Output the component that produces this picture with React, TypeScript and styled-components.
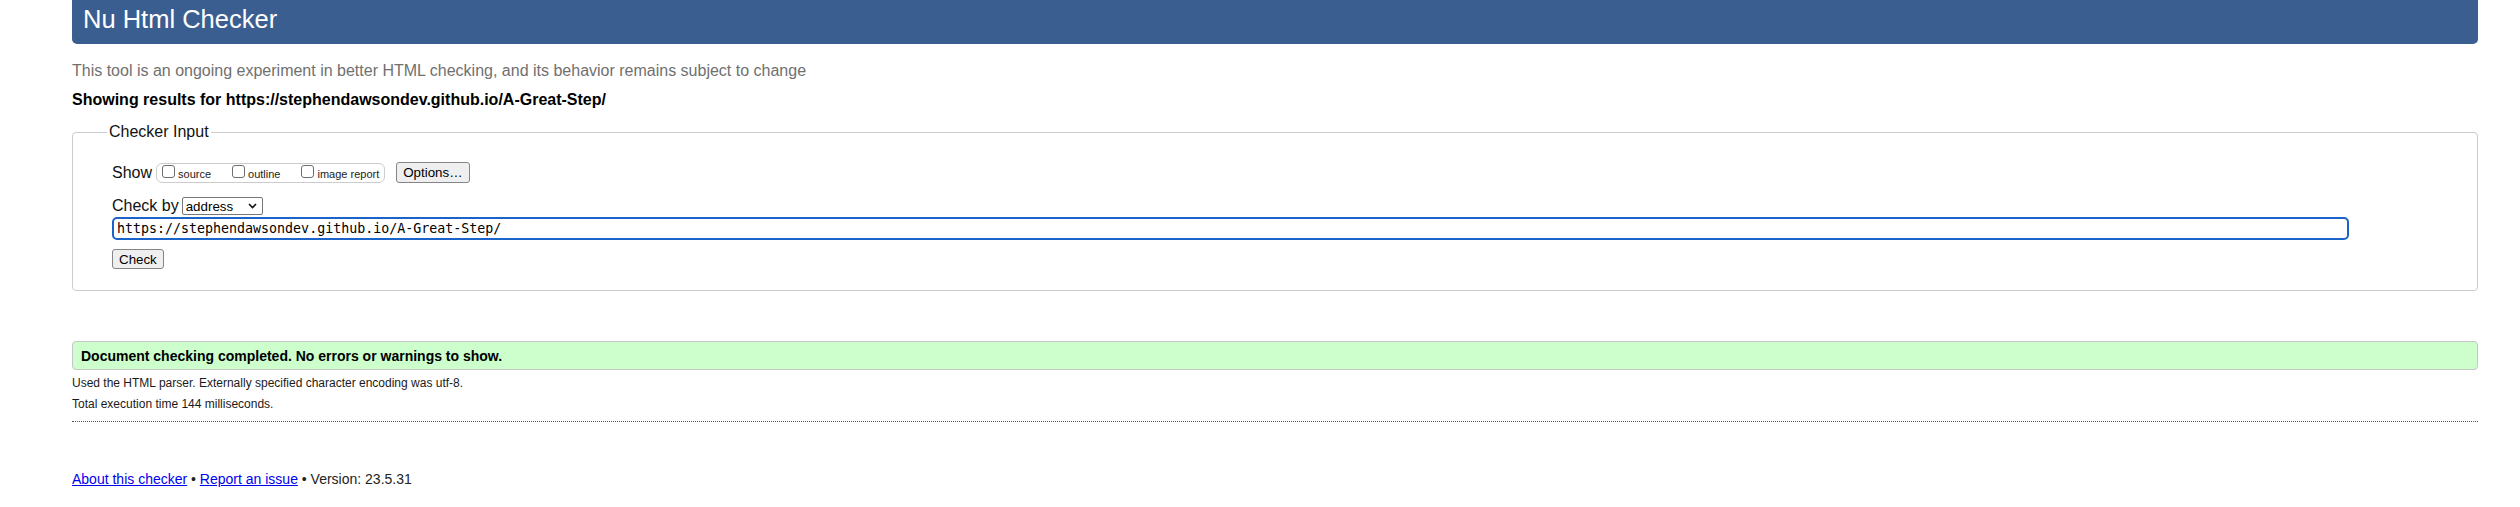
import React from "react";
import styled, { createGlobalStyle } from "styled-components";

const GlobalStyle = createGlobalStyle`
  html, body {
    margin: 0;
    padding: 0;
    background: #ffffff;
  }
  body {
    font-family: "Liberation Sans", Arial, Helvetica, sans-serif;
    color: #000000;
  }
`;

const Page = styled.div`
  padding: 0 42px 0 72px;
`;

const Header = styled.h1`
  margin: 0;
  box-sizing: border-box;
  height: 44px;
  padding: 0 11px 5px;
  line-height: 39px;
  font-size: 25.5px;
  font-weight: normal;
  color: #ffffff;
  background: #3b5e91;
  border-radius: 0 0 5px 5px;
`;

const Lead = styled.p<{ $mt: number; $bold?: boolean; $muted?: boolean }>`
  margin: ${(p) => p.$mt}px 0 0;
  font-size: 16px;
  line-height: 18px;
  font-weight: ${(p) => (p.$bold ? "bold" : "normal")};
  color: ${(p) => (p.$muted ? "#707070" : "#000000")};
`;

const Fieldset = styled.fieldset`
  margin: 14px 0 0;
  padding: 21px 38px 21px 39px;
  border: 1px solid #cccccc;
  border-radius: 4px;
  min-width: 0;
`;

const Legend = styled.legend`
  margin-left: -5px;
  padding: 0 2px;
  font-size: 16px;
  line-height: 18px;
  color: #111111;
`;

const FormRow = styled.div<{ $mt?: number; $h: number }>`
  display: flex;
  align-items: center;
  height: ${(p) => p.$h}px;
  margin-top: ${(p) => p.$mt ?? 0}px;
`;

const RowLabel = styled.span<{ $gap: number }>`
  font-size: 16px;
  line-height: 18px;
  margin-right: ${(p) => p.$gap}px;
  color: #111111;
`;

const OptionGroup = styled.span`
  box-sizing: border-box;
  display: flex;
  align-items: center;
  gap: 21px;
  height: 20px;
  padding: 0 5px 0 5px;
  border: 1px solid #cccccc;
  border-radius: 6px;
`;

const OptionItem = styled.label`
  display: inline-flex;
  align-items: center;
`;

const Checkbox = styled.input.attrs({ type: "checkbox" })`
  appearance: none;
  box-sizing: border-box;
  width: 13px;
  height: 13px;
  margin: -3px 3px 0 0;
  border: 1px solid #6e6e6e;
  border-radius: 3px;
  background: #ffffff;
`;

const OptionText = styled.span`
  font-size: 11px;
  line-height: 13px;
  margin-top: 3px;
  color: #222222;
`;

const Button = styled.button<{ $h: number; $ml?: number }>`
  box-sizing: border-box;
  height: ${(p) => p.$h}px;
  margin: 0 0 0 ${(p) => p.$ml ?? 0}px;
  padding: 0 6px;
  font-family: "Liberation Sans", Arial, Helvetica, sans-serif;
  font-size: 13.333px;
  color: #000000;
  background: #efefef;
  border: 1px solid #858585;
  border-radius: 3px;
`;

const SelectWrap = styled.span`
  position: relative;
  display: inline-flex;
`;

const Select = styled.select`
  appearance: none;
  box-sizing: border-box;
  width: 81px;
  height: 18px;
  padding: 0 0 0 3px;
  font-family: "Liberation Sans", Arial, Helvetica, sans-serif;
  font-size: 13.333px;
  color: #000000;
  background: #ffffff;
  border: 1px solid #767676;
  border-radius: 2px;
`;

const Chevron = styled.svg`
  position: absolute;
  right: 6px;
  top: 6px;
  pointer-events: none;
`;

const UrlInput = styled.input`
  box-sizing: border-box;
  width: calc(100% - 90px);
  height: 23px;
  margin: 2px 0 0;
  padding: 0 3px;
  font-family: "DejaVu Sans Mono", "Liberation Mono", monospace;
  font-size: 13.3px;
  color: #000000;
  border: 2px solid #1b62c9;
  border-radius: 5px;
  outline: none;
`;

const Success = styled.p`
  box-sizing: border-box;
  margin: 50px 0 0;
  height: 29px;
  padding: 2px 8px 0;
  font-size: 14px;
  line-height: 25px;
  font-weight: bold;
  background: #ccffcc;
  border: 1px solid #c6c6c6;
  border-radius: 4px;
`;

const Note = styled.p<{ $mt: number }>`
  margin: ${(p) => p.$mt}px 0 0;
  font-size: 12px;
  line-height: 15px;
  color: #1a1a1a;
`;

const Rule = styled.hr`
  margin: 9px 0 0;
  height: 0;
  border: 0;
  border-top: 1px dotted #555555;
`;

const Footer = styled.p`
  margin: 49px 0 0;
  font-size: 14px;
  line-height: 16px;
  color: #222222;
`;

const FooterLink = styled.a`
  color: #0000ee;
  text-decoration: underline;
`;

export default function App() {
  return (
    <>
      <GlobalStyle />
      <Page>
        <Header>Nu Html Checker</Header>
        <Lead $mt={18} $muted>
          This tool is an ongoing experiment in better HTML checking, and its behavior remains subject to change
        </Lead>
        <Lead $mt={11} $bold>
          Showing results for https://stephendawsondev.github.io/A-Great-Step/
        </Lead>
        <Fieldset>
          <Legend>Checker Input</Legend>
          <FormRow $h={21}>
            <RowLabel $gap={4}>Show</RowLabel>
            <OptionGroup>
              <OptionItem>
                <Checkbox />
                <OptionText>source</OptionText>
              </OptionItem>
              <OptionItem>
                <Checkbox />
                <OptionText>outline</OptionText>
              </OptionItem>
              <OptionItem>
                <Checkbox />
                <OptionText>image report</OptionText>
              </OptionItem>
            </OptionGroup>
            <Button type="button" $h={21} $ml={11}>
              Options…
            </Button>
          </FormRow>
          <FormRow $h={18} $mt={14}>
            <RowLabel $gap={3}>Check by</RowLabel>
            <SelectWrap>
              <Select defaultValue="address">
                <option value="address">address</option>
                <option value="file">file upload</option>
                <option value="text">text input</option>
              </Select>
              <Chevron width="9" height="6" viewBox="0 0 9 6">
                <polyline points="1,1 4.5,4.5 8,1" fill="none" stroke="#111" strokeWidth="1.6" />
              </Chevron>
            </SelectWrap>
          </FormRow>
          <UrlInput type="url" defaultValue="https://stephendawsondev.github.io/A-Great-Step/" />
          <FormRow $h={20} $mt={9}>
            <Button type="button" $h={20}>
              Check
            </Button>
          </FormRow>
        </Fieldset>
        <Success>Document checking completed. No errors or warnings to show.</Success>
        <Note $mt={6}>Used the HTML parser. Externally specified character encoding was utf-8.</Note>
        <Note $mt={6}>Total execution time 144 milliseconds.</Note>
        <Rule />
        <Footer>
          <FooterLink href="#about">About this checker</FooterLink> •{" "}
          <FooterLink href="#issue">Report an issue</FooterLink> • Version: 23.5.31
        </Footer>
      </Page>
    </>
  );
}
